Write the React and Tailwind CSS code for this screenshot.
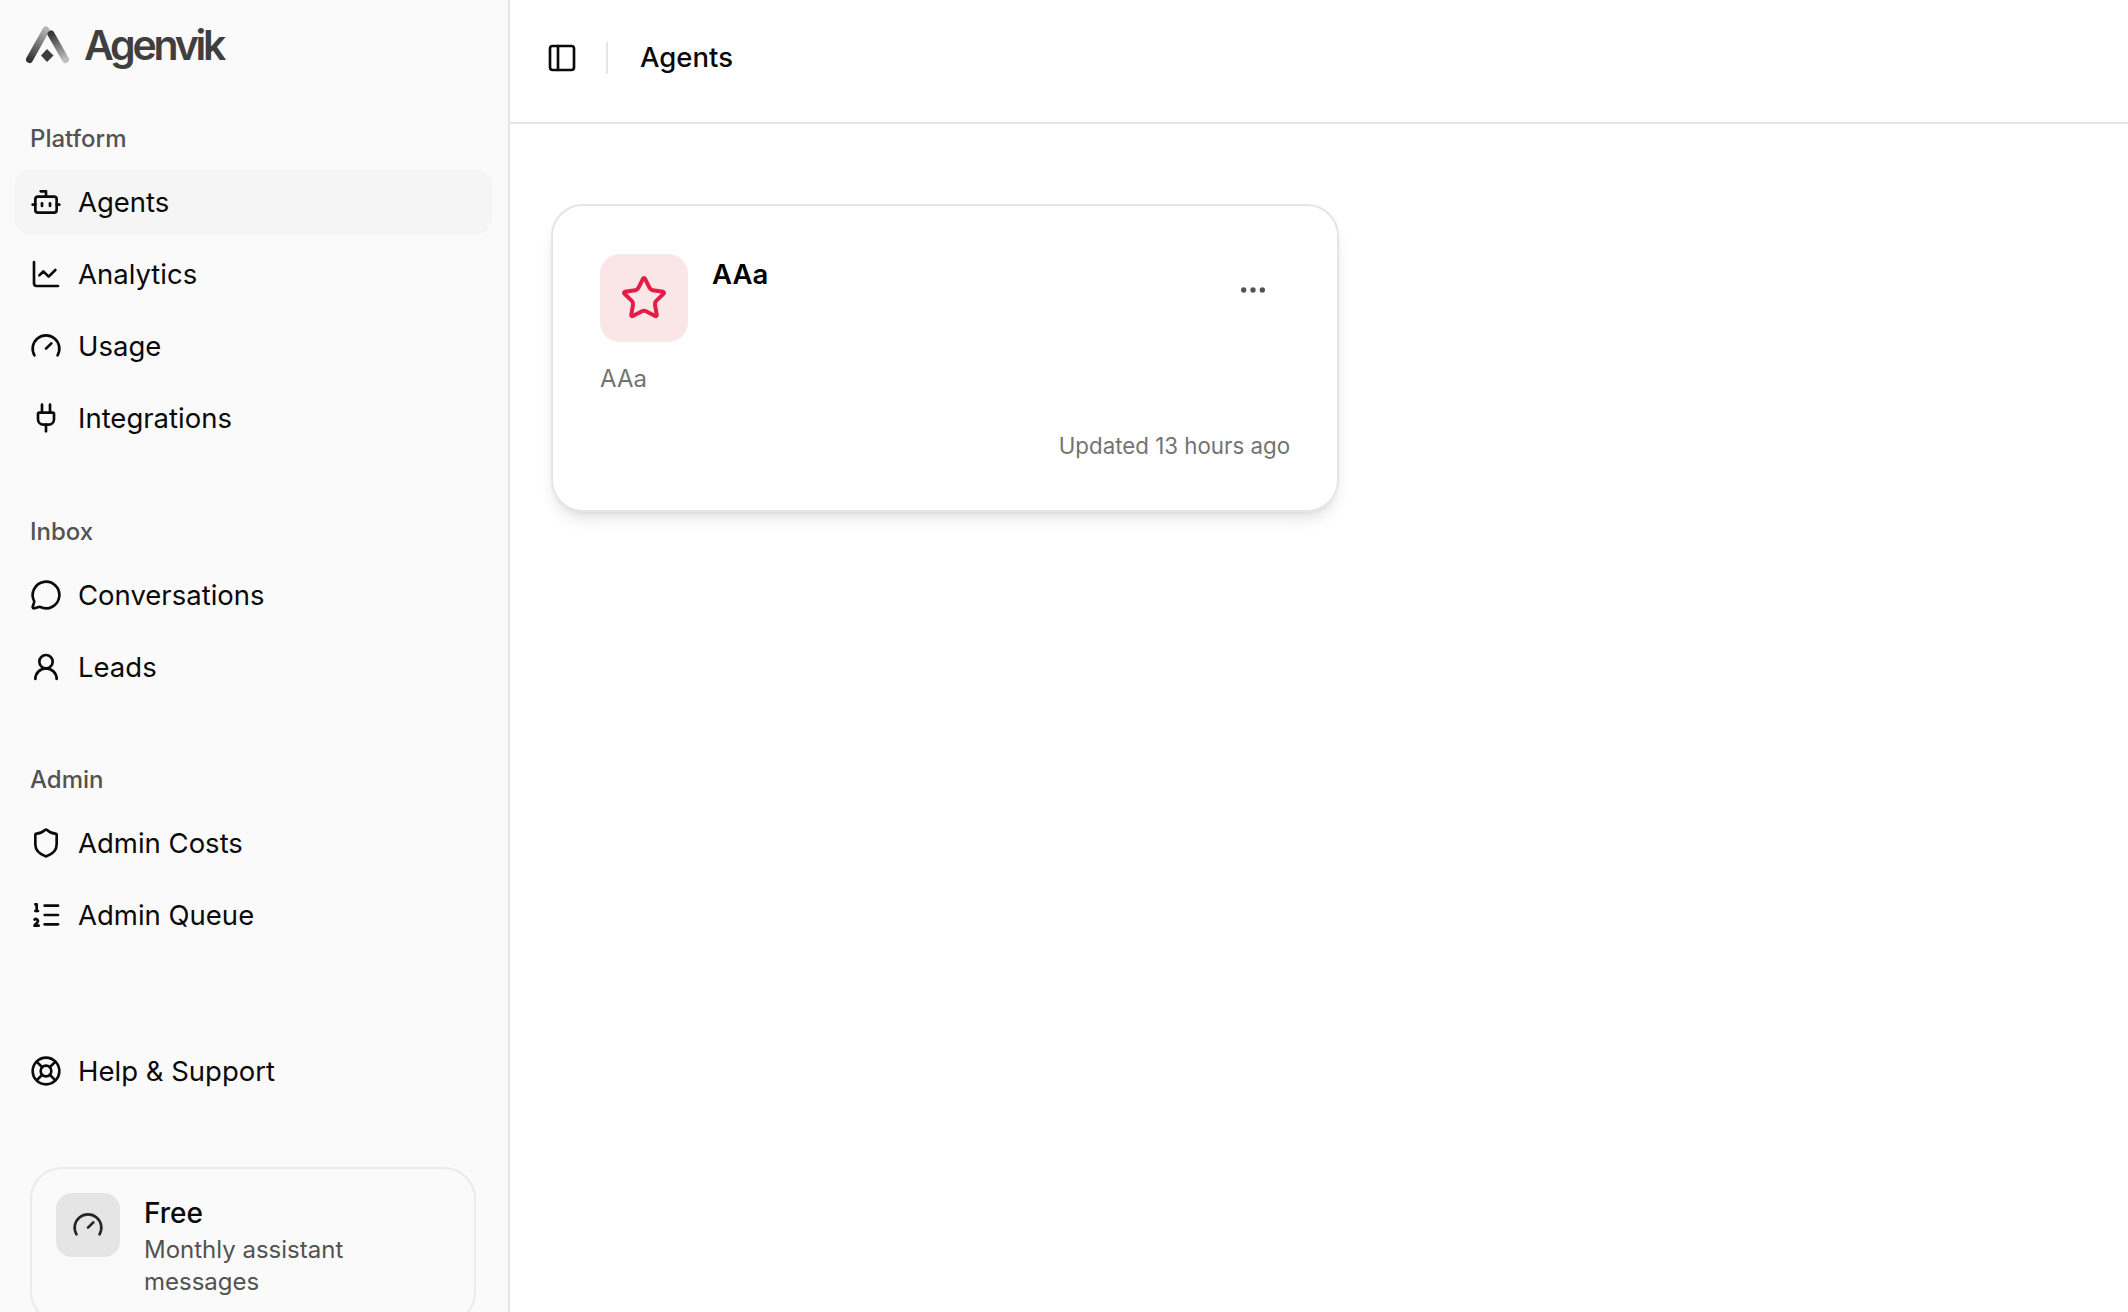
import React from 'react'
import {
  Bot,
  ChartLine,
  Ellipsis,
  Gauge,
  LifeBuoy,
  ListOrdered,
  MessageCircle,
  PanelLeft,
  Plug,
  Shield,
  Star,
  UserRound,
} from 'lucide-react'

const sections = [
  {
    title: 'Platform',
    items: [
      { label: 'Agents', icon: Bot, active: true },
      { label: 'Analytics', icon: ChartLine },
      { label: 'Usage', icon: Gauge },
      { label: 'Integrations', icon: Plug },
    ],
  },
  {
    title: 'Inbox',
    items: [
      { label: 'Conversations', icon: MessageCircle },
      { label: 'Leads', icon: UserRound },
    ],
  },
  {
    title: 'Admin',
    items: [
      { label: 'Admin Costs', icon: Shield },
      { label: 'Admin Queue', icon: ListOrdered },
    ],
  },
]

const LogoMark = () => (
  <svg width="44" height="38" viewBox="0 0 44 38" fill="none">
    <defs>
      <linearGradient id="logoLeft" x1="3" y1="33" x2="21" y2="4" gradientUnits="userSpaceOnUse">
        <stop offset="0" stopColor="#333333" />
        <stop offset="1" stopColor="#b5b5b5" />
      </linearGradient>
      <linearGradient id="logoRight" x1="26" y1="8" x2="39" y2="33" gradientUnits="userSpaceOnUse">
        <stop offset="0" stopColor="#3a3a3a" />
        <stop offset="1" stopColor="#bdbdbd" />
      </linearGradient>
    </defs>
    <path d="M3.5 33.5L20 4" stroke="url(#logoLeft)" strokeWidth="7" strokeLinecap="round" />
    <path d="M25 8L39.5 33.5" stroke="url(#logoRight)" strokeWidth="7" strokeLinecap="round" />
    <path d="M21 23L27.5 29.5L21 36L15 29.5Z" fill="#3d3d3d" />
  </svg>
)

const NavItem = ({ item }) => {
  const Icon = item.icon
  return (
    <div className={`flex h-16 items-center gap-4 rounded-2xl pr-[15px] pl-4 text-[27.5px] text-[#0a0a0a] ${item.active ? 'bg-[#f5f5f5]' : ''}`}>
      <Icon size={32} strokeWidth={2} className="shrink-0" />
      <span className="pt-[2px]">{item.label}</span>
    </div>
  )
}

const Sidebar = () => (
  <aside className="flex h-full w-[510px] shrink-0 flex-col border-r-2 border-[#e5e5e5] bg-[#fafafa] pr-4 pl-[14px]">
    {/* Logo */}
    <div className="flex h-[123px] shrink-0 items-start gap-[14px] pl-3 pt-[26px]">
      <LogoMark />
      <span className="mt-[-11px] text-[41px] font-semibold tracking-[-3.2px] text-[#3f3f3f]">Agenvik</span>
    </div>

    {sections.map((section, i) => (
      <div key={section.title} className={`mb-[65px] shrink-0 ${i === 1 ? 'mt-px' : ''}`}>
        <p className="mb-[15px] px-4 text-[24px] leading-8 font-medium text-[#525252]">{section.title}</p>
        <div className="flex flex-col gap-2">
          {section.items.map((item) => (
            <NavItem key={item.label} item={item} />
          ))}
        </div>
      </div>
    ))}

    <div className="mt-[27px] shrink-0">
      <NavItem item={{ label: 'Help & Support', icon: LifeBuoy }} />
    </div>

    {/* Plan card */}
    <div className="mx-4 mt-16 flex shrink-0 gap-6 rounded-[32px] border-2 border-[#ebebeb] p-6">
      <div className="flex h-16 w-16 shrink-0 items-center justify-center rounded-2xl bg-[#e5e5e5] text-[#262626]">
        <Gauge size={32} strokeWidth={2} />
      </div>
      <div className="pt-[2px]">
        <p className="text-[28px] leading-9 font-medium text-[#0a0a0a]">Free</p>
        <p className="mt-[3px] max-w-[260px] text-[24px] leading-8 text-[#525252]">Monthly assistant messages</p>
      </div>
    </div>
  </aside>
)

const AgentCard = () => (
  <div className="flex h-[308px] w-[788px] flex-col rounded-[32px] border-2 border-[#e5e5e5] bg-white pt-12 pr-[47px] pl-[47px] shadow-lg">
    <div className="flex justify-between">
      <div className="flex gap-6">
        <div className="flex h-[88px] w-[88px] items-center justify-center rounded-[20px] bg-[#fae5e7] text-[#e11d48]">
          <Star size={48} strokeWidth={2} />
        </div>
        <p className="mt-[2px] text-[27.5px] leading-9 font-semibold text-black">AAa</p>
      </div>
      <Ellipsis size={32} strokeWidth={2} className="mt-5 mr-[21px] text-[#525252]" />
    </div>
    <p className="mt-[21px] text-[24px] leading-8 text-[#737373]">AAa</p>
    <p className="mt-[35px] text-right text-[22.3px] leading-8 text-[#737373]">Updated 13 hours ago</p>
  </div>
)

export default function App() {
  return (
    <div className="flex h-screen overflow-hidden bg-white font-['Inter',sans-serif]">
      <Sidebar />
      <main className="flex-1">
        <header className="flex h-[124px] items-center border-b-2 border-[#e5e5e5] pb-[6px] pl-[36px]">
          <PanelLeft size={32} strokeWidth={2} className="text-[#0a0a0a]" />
          <div className="mx-[28px] h-8 w-[2px] bg-[#e5e5e5]" />
          <h1 className="ml-[4px] text-[27.5px] font-medium text-[#0a0a0a]">Agents</h1>
        </header>
        <div className="pt-20 pl-[41px]">
          <AgentCard />
        </div>
      </main>
    </div>
  )
}
